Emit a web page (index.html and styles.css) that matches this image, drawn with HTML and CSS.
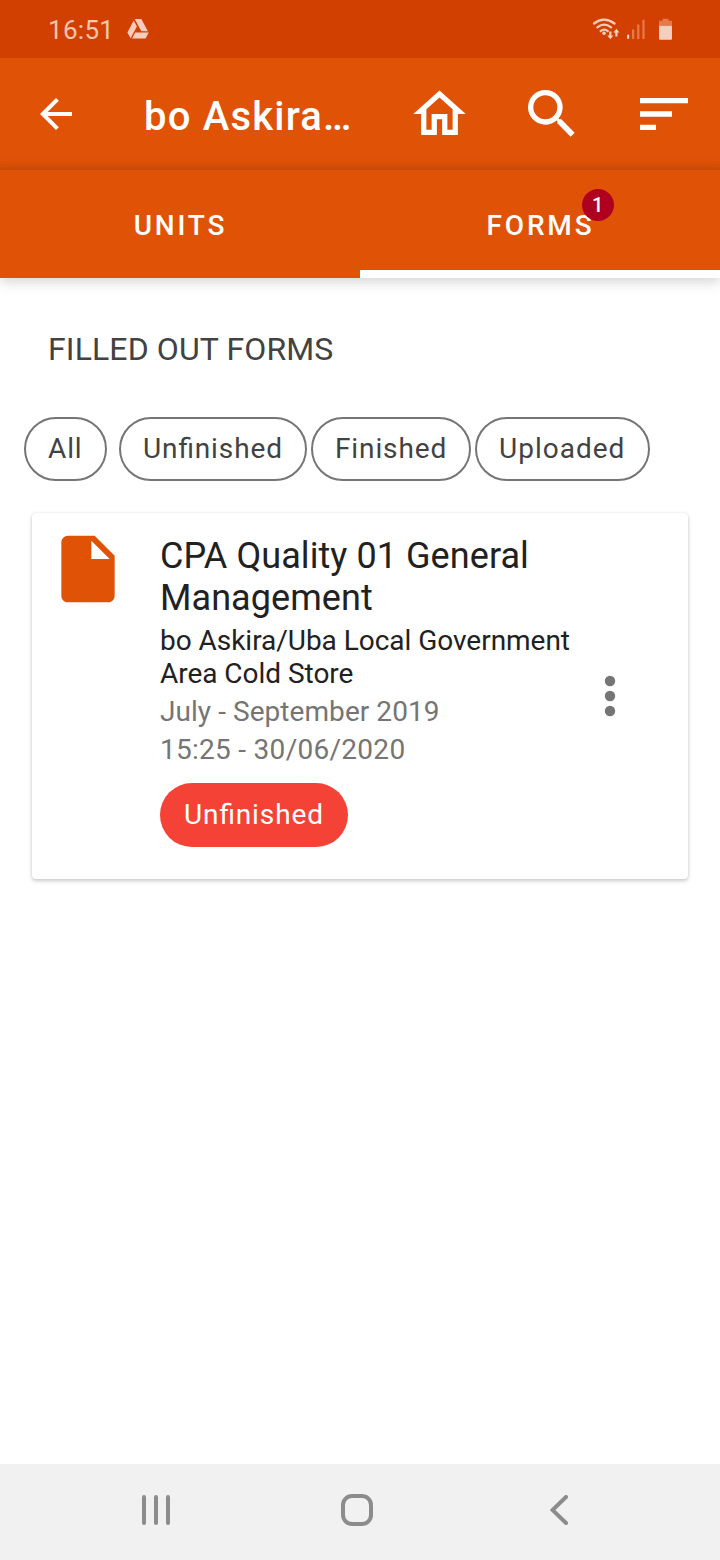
FILE: index.html
```html
<!DOCTYPE html>
<html lang="en">
<head>
<meta charset="utf-8">
<title>Forms</title>
<link rel="stylesheet" href="styles.css">
</head>
<body>
<div class="screen">
  <div class="status">
    <span class="clock">16:51</span>
    <svg class="drive" width="22" height="20" viewBox="0 0 22 20"><path d="M7.700 0h6.600l6.600 12.200h-6.600zM6.700 1.600l3.200 5.900L3.600 19.300 0.400 13.400zM8.200 13.600h13.600l-3.200 6H5z"/></svg>
    <span class="spacer"></span>
    <svg class="signals" width="84" height="26" viewBox="0 0 84 26">
      <g fill="none" stroke="#f8cdb9" stroke-width="2.200" stroke-linecap="round">
        <path d="M2 7.500q10-7.600 20.500 0M5.300 11.400q7-5.400 13.800 0M8.700 15q3.500-2.600 7 0"/>
      </g>
      <circle cx="12" cy="17.200" r="1.800" fill="#f8cdb9"/>
      <path d="M17.200 15.500h2.200v4h2l-3.100 3.700-3.100-3.700h2zM23.300 20.500h2.200v-4h2l-3.100-3.800-3.100 3.800h2z" fill="#f8cdb9"/>
      <rect x="35" y="18.500" width="2.200" height="4.500" rx="1" fill="#f8cdb9"/>
      <path d="M40 13.500h2.200V23H40zM45.200 8.500h2.200V23h-2.200zM50.400 3.800h2.200V23h-2.200z" fill="#e47a4f"/>
      <path d="M70.500 2.800h6v2h3.500v5H67v-5h3.500z" fill="#e47a4f"/>
      <path d="M67 9.800h13v13q0 1-1 1H68q-1 0-1-1z" fill="#f4cfbf"/>
    </svg>
  </div>

  <header class="appbar">
    <svg class="back" width="48" height="48" viewBox="0 0 24 24"><path d="M20 11H7.830l5.590-5.590L12 4l-8 8 8 8 1.410-1.410L7.830 13H20z"/></svg>
    <h1 class="title">bo Askira…</h1>
    <svg class="home" width="63" height="64" viewBox="0 0 24 24"><path d="M12 5.690l5 4.500V18h-2v-6H9v6H7v-7.810l5-4.500M12 3L2 12h3v8h6v-6h2v6h6v-8h3z"/></svg>
    <svg class="search" width="64" height="64" viewBox="0 0 24 24"><path d="M15.500 14h-.79l-.28-.27A6.471 6.471 0 0 0 16 9.500 6.500 6.500 0 1 0 9.500 16c1.610 0 3.090-.59 4.230-1.570l.27.28v.79l5 4.990L20.490 19zM9.500 14a4.500 4.500 0 1 1 0-9 4.500 4.500 0 0 1 0 9z"/></svg>
    <svg class="sort" width="64" height="64" viewBox="0 0 24 24"><path d="M3 18h6v-2H3zM3 6v2h18V6zm0 7h12v-2H3z"/></svg>
  </header>

  <nav class="tabs">
    <div class="tab units">UNITS</div>
    <div class="tab active"><span class="tab-label">FORMS<span class="badge">1</span></span></div>
  </nav>

  <main class="content">
    <h2 class="heading">FILLED OUT FORMS</h2>
    <div class="filters">
      <span class="chip chip-all">All</span>
      <span class="chip chip-unfinished">Unfinished</span>
      <span class="chip chip-finished">Finished</span>
      <span class="chip chip-uploaded">Uploaded</span>
    </div>
    <article class="card">
      <svg class="file" width="80" height="80" viewBox="0 0 24 24"><path d="M6 2c-1.100 0-1.990.9-1.990 2L4 20c0 1.100.89 2 1.990 2H18c1.100 0 2-.9 2-2V8l-6-6zm7 7V3.500L18.500 9z"/></svg>
      <div class="info">
        <h3 class="name">CPA Quality 01 General<br>Management</h3>
        <p class="place">bo Askira/Uba Local Government<br>Area Cold Store</p>
        <p class="meta period">July - September 2019</p>
        <p class="meta stamp">15:25 - 30/06/2020</p>
        <span class="state">Unfinished</span>
      </div>
      <svg class="more" width="12" height="42" viewBox="0 0 12 42"><circle cx="6" cy="6" r="5.200"/><circle cx="6" cy="21" r="5.200"/><circle cx="6" cy="36" r="5.200"/></svg>
    </article>
  </main>

  <footer class="navbar">
    <svg width="28" height="30" viewBox="0 0 28 30"><path d="M2 2v26M14 2v26M26 2v26"/></svg>
    <svg class="nav-home" width="32" height="32" viewBox="0 0 32 32"><rect x="2" y="2" width="28" height="28" rx="9"/></svg>
    <svg class="nav-back" width="18" height="30" viewBox="0 0 18 30"><path d="M16 2L2.500 15 16 28"/></svg>
  </footer>
</div>
</body>
</html>
```

FILE: styles.css
```css
* { box-sizing: border-box; margin: 0; padding: 0; }
body { font-family: Roboto, sans-serif; font-size: 28px; background: #fff; }
svg { display: block; flex: none; }
.screen { width: 720px; height: 1560px; display: flex; flex-direction: column; overflow: hidden; }

.status { height: 58px; background: #d14000; display: flex; align-items: center; padding: 0 40px 0 48px; flex: none; }
.clock { width: 79px; font-size: 26px; letter-spacing: 0.3px; line-height: 30px; padding-top: 2px; color: #f8c5ad; }
.drive { fill: #f8cdbd; }
.spacer { flex: 1; }
.signals { margin-right: 4px; }

.appbar { height: 112px; flex: none; display: flex; align-items: flex-start; padding: 24px 24px 0 32px; color: #fff; fill: #fff; background: linear-gradient(#e05206 98px, #dc5006 105px, #d04c08 112px); }
.back { margin-top: 8px; }
.title { width: 264px; margin: 11px 0 0 64px; font-size: 40px; line-height: 47px; font-weight: 500; letter-spacing: 1.2px; white-space: nowrap; }
.search { margin-left: 49px; }
.sort { margin-left: 48px; }

.tabs { height: 108px; flex: none; display: flex; background: #e05206; color: #fff; box-shadow: 0 4px 12px rgba(0,0,0,.17); }
.tab { flex: 1; display: flex; align-items: center; justify-content: center; font-weight: 500; letter-spacing: 2.8px; padding-top: 2px; }
.tab.units { padding-left: 1px; }
.tab.active { border-bottom: 8px solid #fff; padding: 10px 0 0 1px; }
.tab-label { position: relative; }
.badge { position: absolute; left: 95px; top: -20px; width: 32px; height: 32px; border-radius: 50%; background: #b00020; font-size: 20px; line-height: 32px; letter-spacing: 0; text-align: center; }

.content { flex: 1; }
.heading { font-weight: 400; font-size: 32px; line-height: 38px; margin: 52px 48px 0; color: #424242; letter-spacing: 0.12px; }
.filters { display: flex; margin: 49px 24px 0; }
.chip, .state { height: 64px; line-height: 60px; border-radius: 32px; font-size: 28px; letter-spacing: 0.88px; font-feature-settings: "liga" 1; }
.chip { border: 2px solid #757575; padding-left: 22px; color: #424242; }
.chip-all { width: 83px; margin-right: 12px; }
.chip-unfinished { width: 188px; margin-right: 4px; }
.chip-finished { width: 160px; margin-right: 4px; }
.chip-uploaded { width: 175px; letter-spacing: 1px; }

.card { margin: 32px 32px 0; height: 366px; border-radius: 4px; background: #fff; box-shadow: 0 2px 4px rgba(0,0,0,.2), 0 0 2px rgba(0,0,0,.1); display: flex; align-items: flex-start; padding: 16px; }
.file { fill: #e05206; }
.info { width: 452px; padding: 6px 0 0 32px; white-space: nowrap; }
.name { font-size: 36px; line-height: 42px; font-weight: 400; color: #212121; letter-spacing: 0.07px; }
.place { margin-top: 5px; line-height: 33px; color: #212121; letter-spacing: -0.03px; }
.meta { line-height: 33px; margin-top: 5px; color: #757575; }
.period { letter-spacing: 0.06px; }
.stamp { letter-spacing: 0.28px; }
.state { display: block; width: 188px; margin-top: 17px; padding-left: 24px; line-height: 64px; background: #f44336; color: #fff; }
.more { margin: 146px 0 0 24px; fill: #757575; }

.navbar { height: 96px; flex: none; background: #f1f1f1; display: flex; align-items: center; padding: 0 0 4px 142px; }
.navbar svg { fill: none; stroke: #8c8c8c; stroke-width: 4; stroke-linecap: round; }
.nav-home { margin-left: 171px; }
.nav-back { margin-left: 177px; }
```
